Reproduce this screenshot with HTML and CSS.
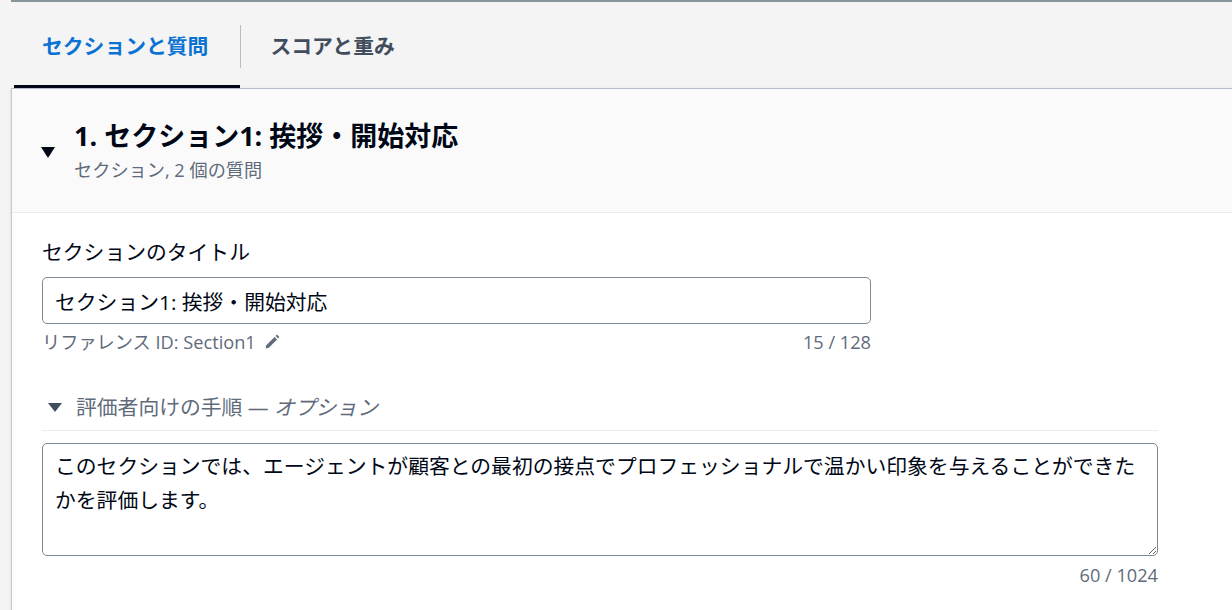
FILE: index.html
```html
<!DOCTYPE html>
<html lang="ja">
<head>
  <meta charset="UTF-8" />
  <meta name="viewport" content="width=device-width, initial-scale=1.0" />
  <title>評価フォーム - セクションと質問</title>
  <link rel="stylesheet" href="styles.css">
</head>
<body>
  <!-- 前のコンテナの下端 -->
  <div class="prev-edge"></div>

  <!-- タブ -->
  <div class="tabs">
    <div class="tab active">セクションと質問</div>
    <div class="tab-sep"></div>
    <div class="tab">スコアと重み</div>
  </div>

  <!-- セクション -->
  <div class="section">
    <div class="section-header">
      <svg class="caret" width="14" height="12" viewBox="0 0 14 12">
        <polygon points="0,0 14,0 7,11" fill="#000716" />
      </svg>
      <div>
        <h2 class="section-title">1. セクション1: 挨拶・開始対応</h2>
        <div class="section-meta">セクション, 2 個の質問</div>
      </div>
    </div>

    <div class="section-body">
      <div class="field">
        <label class="field-label" for="titleInput">セクションのタイトル</label>
        <input type="text" id="titleInput" class="text-input" value="セクション1: 挨拶・開始対応" />
        <div class="hint">
          <span class="ref-id">リファレンス ID: Section1
            <svg width="16" height="16" viewBox="0 0 16 16">
              <path d="M1.5 14.5 L2.3 11.2 L10.6 2.9 L13.1 5.4 L4.8 13.7 Z" fill="#5f6b7a" />
              <path d="M11.6 1.9 L12.9 0.6 L15.4 3.1 L14.1 4.4 Z" fill="#5f6b7a" />
            </svg>
          </span>
          <span>15 / 128</span>
        </div>
      </div>

      <div class="expander">
        <div class="expander-head">
          <svg class="caret-sm" width="14" height="10" viewBox="0 0 14 10">
            <polygon points="0,0 14,0 7,9" fill="#414d5c" />
          </svg>
          <span>評価者向けの手順 — <em>オプション</em></span>
        </div>
        <textarea class="text-area">このセクションでは、エージェントが顧客との最初の接点でプロフェッショナルで温かい印象を与えることができたかを評価します。</textarea>
        <div class="hint hint-right">
          <span>60 / 1024</span>
        </div>
      </div>
    </div>
  </div>
</body>
</html>
```

FILE: styles.css
```css
:root {
  --text: #000716;
  --text-muted: #5f6b7a;
  --text-tab: #414d5c;
  --primary: #0972d3;
  --input-border: #7d8998;
  --divider: #e9ebed;
  --bg: #f4f4f4;
}

body {
  margin: 0;
  padding: 0;
  background: var(--bg);
  color: var(--text);
  font-family: "Open Sans", "Noto Sans CJK JP", sans-serif;
  font-size: 20.8px;
  line-height: 29px;
  overflow: hidden;
}

.prev-edge {
  margin-left: 11px;
  height: 2px;
  background: #87959a;
}

.tabs {
  display: flex;
  align-items: stretch;
  margin-left: 14px;
  height: 86px;
}

.tab {
  padding: 30px 30px 0 28px;
  font-weight: bold;
  color: var(--text-tab);
  box-sizing: border-box;
  border-bottom: 3px solid transparent;
}

.tab.active {
  padding-right: 32px;
  color: var(--primary);
  border-bottom-color: var(--text);
}

.tab-sep {
  width: 1px;
  height: 43px;
  background: #b4bec6;
  margin-top: 23px;
  margin-right: 1px;
}

.section {
  margin-left: 11px;
  background: white;
  border-top: 1px solid #b6bec9;
  border-left: 1px solid #c6c9cd;
  box-shadow: -1px 0 2px rgba(0, 0, 0, 0.06);
  min-height: 600px;
}

.section-header {
  display: flex;
  align-items: center;
  gap: 19px;
  padding: 29px 30px 28px 29px;
  background: #fafafa;
  border-bottom: 1px solid var(--divider);
}

.caret {
  flex: none;
  margin-top: 4px;
}

.section-title {
  margin: 0;
  font-size: 27px;
  line-height: 36px;
  font-weight: bold;
}

.section-meta {
  margin-top: 2px;
  font-size: 18.2px;
  line-height: 28px;
  color: var(--text-muted);
}

.section-body {
  padding: 25px 30px 24px;
}

.field {
  width: 829px;
}

.field-label {
  display: block;
  margin-bottom: 10px;
}

.text-input {
  display: block;
  width: 100%;
  box-sizing: border-box;
  height: 47px;
  padding: 0 12px;
  font: inherit;
  color: var(--text);
  border: 1px solid var(--input-border);
  border-radius: 5px;
  background: white;
}

.hint {
  display: flex;
  justify-content: space-between;
  font-size: 18.2px;
  line-height: 26px;
  color: var(--text-muted);
  margin-top: 5px;
}

.ref-id svg {
  vertical-align: -1px;
  margin-left: 4px;
}

.expander {
  width: 1116px;
  margin-top: 38px;
}

.expander-head {
  display: flex;
  align-items: center;
  gap: 14px;
  padding: 0 0 8px 6px;
  border-bottom: 1px solid var(--divider);
  color: var(--text-muted);
}

.expander-head em {
  font-style: italic;
}

.caret-sm {
  flex: none;
}

.text-area {
  display: block;
  width: 100%;
  box-sizing: border-box;
  height: 113px;
  margin-top: 12px;
  padding: 5px 12px;
  font: inherit;
  line-height: 34px;
  color: var(--text);
  border: 1px solid var(--input-border);
  border-radius: 5px;
  resize: vertical;
}

.hint-right {
  justify-content: flex-end;
  margin-top: 6px;
}
```
